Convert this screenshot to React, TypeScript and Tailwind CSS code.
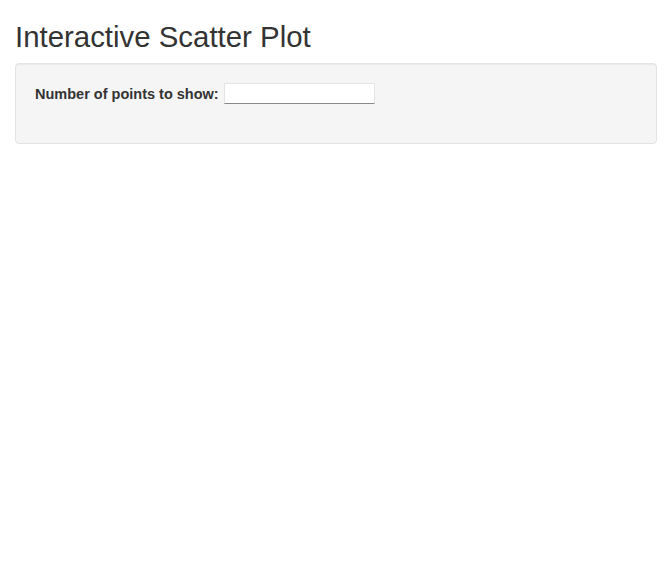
export default function App() {
  return (
    <div className="min-h-screen bg-white px-[15px] font-['Liberation_Sans',Arial,sans-serif] text-[14px] leading-[20px] text-[#333]">
      <h2 className="mt-[20px] mb-[10px] text-[29.4px] leading-[33px] font-normal">
        Interactive Scatter Plot
      </h2>
      <div className="h-[81px] rounded-[4px] border border-[#e3e3e3] bg-[#f5f5f5] p-[19px] shadow-[inset_0_1px_1px_rgba(0,0,0,0.05)]">
        <div className="flex items-center">
          <label className="text-[14.5px] font-bold">Number of points to show:</label>
          <input
            type="text"
            className="ml-[5px] h-[21px] w-[151px] border border-[#e4e4e4] border-b-[#8a8a8a] bg-white px-1 outline-none"
          />
        </div>
      </div>
    </div>
  );
}
